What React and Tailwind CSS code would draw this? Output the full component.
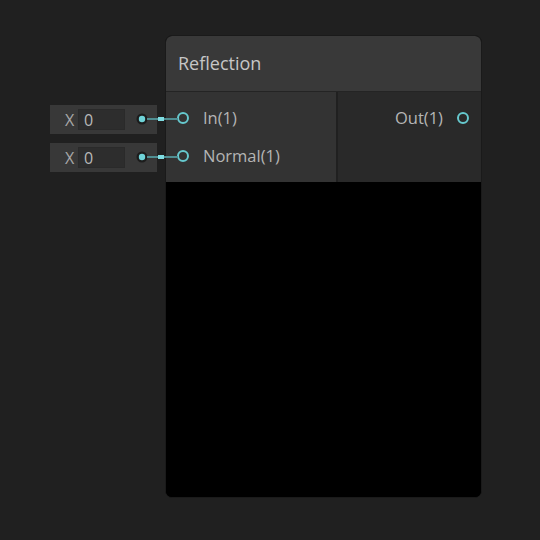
import React from 'react';

const inputs = [{ name: 'In(1)', value: '0' }, { name: 'Normal(1)', value: '0' }];

function InputField({ value }) {
  return (
    <div className="relative flex h-[29px] w-[115px] items-center">
      <div className="flex h-full w-[107px] items-center bg-[#383838] pl-[15px]">
        <span className="w-[13px] text-[16px] text-[#a8a8a8]">X</span>
        <div className="flex h-[21px] w-[47px] items-center border border-[#2a2a2a] bg-[#2d2d2d] pl-[5px] text-[16px] text-[#b8b8b8]">
          {value}
        </div>
      </div>
      {/* wire from the field into the node port */}
      <svg className="absolute left-[86px] top-[7px]" width="48" height="16" viewBox="0 0 48 16">
        <circle cx="6" cy="7" r="5.5" fill="#1c1c1c" />
        <circle cx="6" cy="7" r="3.2" fill="#6fd3d8" />
        <line x1="11" y1="7" x2="42" y2="7" stroke="#4f8e92" strokeWidth="2" />
        <rect x="22" y="5" width="6" height="4" fill="#7fdde2" />
      </svg>
    </div>
  );
}

function Port({ label, right }) {
  const ring = <span className="h-[12px] w-[12px] shrink-0 rounded-full border-2 border-[#66c9ce]" />;
  return (
    <div className={`flex h-[38px] items-center gap-[14px] ${right ? 'justify-end' : ''}`}>
      {!right && ring}
      <span className="text-[16.5px] text-[#b5b5b5]">{label}</span>
      {right && ring}
    </div>
  );
}

export default function App() {
  return (
    <div
      className="flex h-[540px] w-[540px] bg-[#202020] pl-[50px] pt-[35px]"
      style={{ fontFamily: '"Open Sans", "Noto Sans", sans-serif' }}
    >
      <div className="flex w-[115px] flex-col gap-[9px] pt-[70px]">
        {inputs.map((el) => (
          <InputField key={el.name} value={el.value} />
        ))}
      </div>
      <div className="flex h-[463px] w-[317px] flex-col overflow-hidden rounded-[7px] border border-[#1a1a1a] bg-black">
        <div className="flex h-[56px] items-center border-b border-[#242424] bg-[#393939] pl-[12px]">
          <span className="text-[18px] text-[#c6c6c6]">Reflection</span>
        </div>
        <div className="flex h-[90px]">
          <div className="flex w-[172px] flex-col border-r-2 border-[#202020] bg-[#333333] pl-[11px] pt-[7px]">
            {inputs.map((el) => (
              <Port key={el.name} label={el.name} />
            ))}
          </div>
          <div className="flex flex-1 flex-col bg-[#292929] pr-[12px] pt-[7px]">
            <Port label="Out(1)" right />
          </div>
        </div>
        <div className="flex-1 bg-black" />
      </div>
    </div>
  );
}
